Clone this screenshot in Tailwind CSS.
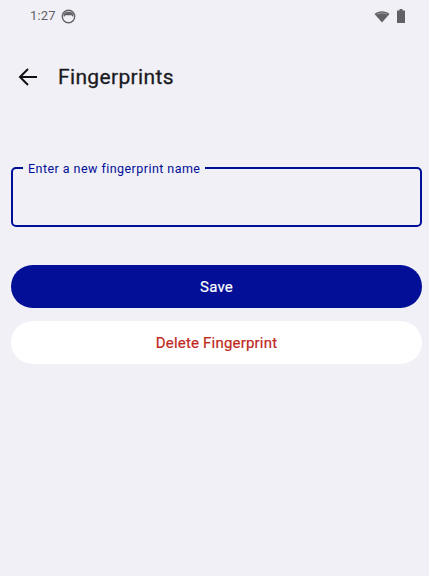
<!DOCTYPE html>
<html lang="en">
<head>
  <meta charset="UTF-8" />
  <meta name="viewport" content="width=device-width, initial-scale=1" />
  <title>Fingerprints</title>
  <script src="https://cdn.jsdelivr.net/npm/@tailwindcss/browser@4"></script>
</head>
<body class="bg-[#f1f0f6] h-[576px] overflow-hidden font-['Roboto',sans-serif]">
  <!-- status bar -->
  <div class="flex items-center justify-between h-[32px] pl-[30px] pr-[23px]">
    <div class="flex items-center gap-[5px]">
      <span class="text-[13px] text-[#626266] tracking-[0.2px]">1:27</span>
      <svg width="15" height="15" viewBox="0 0 15 15">
        <circle cx="7.5" cy="7.5" r="6.2" fill="none" stroke="#626266" stroke-width="1.4"/>
        <path d="M2.5 6 C2.5 1.5 12.5 1.5 12.5 6 L12 8 L10.5 6.3 L4.5 6.3 L3 8 Z" fill="#626266"/>
      </svg>
    </div>
    <div class="flex items-center gap-[6px]">
      <svg width="16" height="13" viewBox="0 0 16 13">
        <path d="M0.5 4 C4.5 0.3 11.5 0.3 15.5 4 L8 12.5 Z" fill="#626266"/>
        <path d="M3 4.2 C6 2.6 10 2.6 13 4.2" fill="none" stroke="#b5b5ba" stroke-width="0.7"/>
      </svg>
      <svg width="10" height="14" viewBox="0 0 10 14"><path d="M3.5 0 H6.5 V1.5 H9 V14 H1 V1.5 H3.5 Z" fill="#626266"/></svg>
    </div>
  </div>

  <!-- top bar -->
  <div class="flex items-center h-[56px] mt-[18px] pl-[18px]">
    <svg width="20" height="20" viewBox="0 0 20 20" fill="none" stroke="#111114" stroke-width="2"><path d="M19 9 H3 M10 1 L2 9 L10 17"/></svg>
    <h1 class="ml-[20px] text-[21px] [-webkit-text-stroke:0.3px] text-[#1b1b1f] tracking-[0.35px]">Fingerprints</h1>
  </div>

  <!-- field -->
  <div class="relative ml-[11px] mr-[7px] mt-[61px] h-[60px] border-2 border-[#000f96] rounded-[5px]">
    <span class="absolute left-[10px] top-[-7px] bg-[#f1f0f6] px-[5px] text-[12.5px] leading-[14px] tracking-[0.45px] text-[#000f96]">Enter a new fingerprint name</span>
  </div>

  <!-- buttons -->
  <div class="ml-[11px] mr-[7px] mt-[38px] flex flex-col gap-[13px]">
    <button class="h-[43px] pt-[2px] rounded-full bg-[#020f96] text-white text-[15px] [-webkit-text-stroke:0.2px] tracking-[0.2px]">Save</button>
    <button class="h-[43px] pt-[2px] rounded-full bg-white text-[#c0281c] text-[15px] [-webkit-text-stroke:0.2px] tracking-[0.2px]">Delete Fingerprint</button>
  </div>
</body>
</html>
